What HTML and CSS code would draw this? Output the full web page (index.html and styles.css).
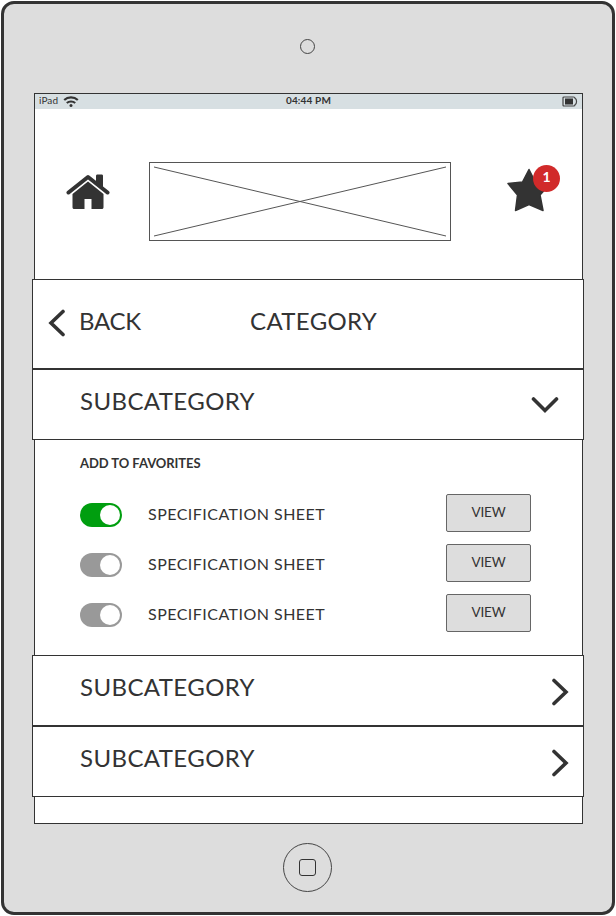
FILE: index.html
```html
<!DOCTYPE html>
<html lang="en">
<head>
    <meta charset="UTF-8">
    <meta name="viewport" content="width=device-width, initial-scale=1.0">
    <title>Category</title>
    <link rel="stylesheet" href="styles.css">
</head>
<body>
    <div class="tablet">
        <div class="camera"></div>
        <div class="screen">
            <!-- Status bar -->
            <div class="status-bar">
                <div class="status-left">
                    <span class="carrier">iPad</span>
                    <svg class="wifi" width="16" height="12" viewBox="0 0 16 12">
                        <path d="M1.200 4C5 .6 11 .6 14.800 4M3.800 7c2.300-2 6.100-2 8.400 0" fill="none" stroke="#333" stroke-width="2.200"/>
                        <circle cx="8" cy="9.500" r="1.500" fill="#333"/>
                    </svg>
                </div>
                <span class="time">04:44 PM</span>
                <svg class="battery" width="16" height="11" viewBox="0 0 16 11">
                    <path d="M2 1h9.500c1 0 1.500.5 1.600 1.400 1.900.7 1.900 5.500 0 6.200-.1.900-.6 1.400-1.600 1.400H2C1.300 10 1 9.700 1 9V2c0-.7.3-1 1-1z" fill="none" stroke="#444" stroke-width="1.200"/>
                    <rect x="3" y="2.500" width="8" height="6" fill="#333"/>
                </svg>
            </div>

            <header class="header">
                <svg class="home-icon" width="44" height="36" viewBox="0 0 44 36">
                    <path d="M2.500 18.500L22 3l19.500 15.500" fill="none" stroke="#333" stroke-width="4" stroke-linecap="round" stroke-linejoin="round"/>
                    <path d="M30 2c0-1 .5-1.500 1.500-1.500h4c1 0 1.500.5 1.500 1.500v12l-7-5.500z" fill="#333"/>
                    <path d="M22 7.500l15.500 12.500v13c0 1.500-.5 2-2 2H25.500V25h-7v10H8.500c-1.500 0-2-.5-2-2V20z" fill="#333"/>
                </svg>
                <svg class="logo" width="302" height="79" viewBox="0 0 302 79">
                    <rect x=".5" y=".5" width="301" height="78" fill="#fff" stroke="#555"/>
                    <path d="M5 5l292 69M297 5L5 74" stroke="#555"/>
                </svg>
                <div class="favorites">
                    <svg width="44" height="44" viewBox="0 0 44 44">
                        <path d="M22 1.500l6.500 13 14.500 1.500-10 11 3 15.500L22 36.500 8.500 42.500l2-15.500L1 15.500l14.500-1.500z" fill="#333" stroke="#333" stroke-width="1.500" stroke-linejoin="round"/>
                    </svg>
                    <span class="badge">1</span>
                </div>
            </header>

            <nav class="bar bar-nav">
                <svg class="icon-back" width="18" height="28" viewBox="0 0 18 28">
                    <path class="chevron" d="M15 2.500L3 14l12 11.500"/>
                </svg>
                <span class="back">BACK</span>
                <span class="category">CATEGORY</span>
            </nav>

            <div class="bar">
                <span class="subcategory">SUBCATEGORY</span>
                <svg class="icon-down" width="28" height="18" viewBox="0 0 28 18">
                    <path class="chevron" d="M2.500 3L14 14.500 25.500 3"/>
                </svg>
            </div>

            <div class="panel">
                <div class="panel-title">ADD TO FAVORITES</div>
                <div class="spec-row">
                    <span class="toggle toggle-on"></span>
                    <span class="spec-name">SPECIFICATION SHEET</span>
                    <button class="view-btn">VIEW</button>
                </div>
                <div class="spec-row">
                    <span class="toggle"></span>
                    <span class="spec-name">SPECIFICATION SHEET</span>
                    <button class="view-btn">VIEW</button>
                </div>
                <div class="spec-row">
                    <span class="toggle"></span>
                    <span class="spec-name">SPECIFICATION SHEET</span>
                    <button class="view-btn">VIEW</button>
                </div>
            </div>

            <div class="bar">
                <span class="subcategory">SUBCATEGORY</span>
                <svg class="icon-next" width="18" height="28" viewBox="0 0 18 28">
                    <path class="chevron" d="M3 2.500L15 14 3 25.500"/>
                </svg>
            </div>
            <div class="bar">
                <span class="subcategory">SUBCATEGORY</span>
                <svg class="icon-next" width="18" height="28" viewBox="0 0 18 28">
                    <path class="chevron" d="M3 2.500L15 14 3 25.500"/>
                </svg>
            </div>
        </div>
        <div class="home-button"><span></span></div>
    </div>
</body>
</html>
```
FILE: styles.css
```css
* {
    box-sizing: border-box;
}
body {
    margin: 0;
    padding: 1px;
    background: #fff;
    color: #333;
    font-family: Lato, sans-serif;
}
svg {
    display: block;
    flex: none;
}
.tablet {
    width: 614px;
    height: 914px;
    border: 3px solid #333;
    border-radius: 13px;
    background: #ddd;
    display: flex;
    flex-direction: column;
    align-items: center;
}
.camera {
    width: 15px;
    height: 15px;
    margin: 35px 1px 39px 0;
    border: 1px solid #444;
    border-radius: 50%;
}
.screen {
    width: 549px;
    height: 731px;
    margin-left: 1px;
    border: 1px solid #333;
    background: #fff;
}
.status-bar {
    height: 15px;
    padding: 0 4px;
    background: #d7dfe2;
    display: grid;
    grid-template-columns: 1fr auto 1fr;
    align-items: center;
}
.status-left {
    display: flex;
    align-items: center;
    gap: 5px;
}
.carrier,
.time {
    padding-bottom: 2px;
    font-size: 10px;
    line-height: 13px;
    letter-spacing: 0.1px;
}
.time {
    font-weight: bold;
    letter-spacing: 0.15px;
}
.battery {
    justify-self: end;
}
.header {
    height: 170px;
    padding: 53px 31px 0;
    display: flex;
    align-items: flex-start;
}
.home-icon {
    margin-top: 12px;
}
.logo {
    margin-left: 39px;
}
.favorites {
    position: relative;
    margin: 6px 0 0 56px;
}
.badge {
    position: absolute;
    left: 26px;
    top: -3px;
    width: 27px;
    height: 27px;
    border-radius: 50%;
    background: #d12a2a;
    color: #fff;
    font-size: 14px;
    font-weight: bold;
    line-height: 24px;
    text-align: center;
}

/* Bars stick out a little over the screen edges */
.bar {
    height: 71px;
    margin: 0 -2px 0 -3px;
    padding-left: 47px;
    border: 1px solid #333;
    background: #fff;
    display: flex;
    align-items: flex-start;
    font-size: 24px;
    line-height: 28px;
}
.bar-nav {
    height: 90px;
    padding-left: 15px;
}
.chevron {
    fill: none;
    stroke: #333;
    stroke-width: 3.6;
    stroke-linecap: round;
}
.icon-back {
    margin-top: 29px;
}
.back {
    width: 171px;
    margin: 27px 0 0 13px;
    letter-spacing: -0.3px;
}
.category {
    margin-top: 27px;
    letter-spacing: 0.35px;
}
.subcategory {
    margin-top: 17px;
    letter-spacing: 0.4px;
}
.icon-down {
    margin: 26px 24px 0 auto;
}
.icon-next {
    margin: 22px 14px 0 auto;
}
.panel {
    height: 215px;
    padding: 15px 51px 0 45px;
}
.panel-title {
    height: 39px;
    font-size: 13px;
    font-weight: bold;
    line-height: 16px;
    letter-spacing: -0.05px;
}
.spec-row {
    height: 38px;
    margin-bottom: 12px;
    display: flex;
    align-items: center;
}
.toggle {
    width: 42px;
    height: 24px;
    margin-top: 4px;
    padding: 2px;
    border-radius: 12px;
    background: #999;
    display: flex;
    justify-content: flex-end;
}
.toggle::after {
    content: "";
    width: 20px;
    height: 20px;
    border-radius: 50%;
    background: #fff;
}
.toggle-on {
    background: #009e0f;
}
.spec-name {
    margin: 2px 0 0 26px;
    font-size: 16px;
    line-height: 20px;
    letter-spacing: 0.47px;
}
.view-btn {
    width: 85px;
    height: 38px;
    margin-left: auto;
    padding: 0 0 3px;
    border: 1px solid #666;
    border-radius: 2px;
    background: #ddd;
    color: #333;
    font-family: inherit;
    font-size: 13.5px;
    letter-spacing: -0.2px;
}
.home-button {
    width: 49px;
    height: 49px;
    margin: 19px 1px 0 0;
    border: 1px solid #444;
    border-radius: 50%;
    display: flex;
    align-items: center;
    justify-content: center;
}
.home-button span {
    width: 17px;
    height: 17px;
    border: 1px solid #333;
    border-radius: 3px;
}
```
